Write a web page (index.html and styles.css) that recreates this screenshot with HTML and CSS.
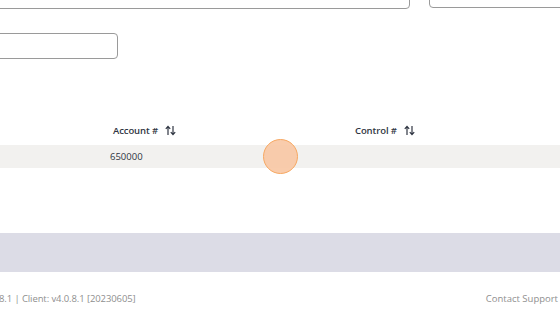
FILE: index.html
```html
<!DOCTYPE html>
<html>
<head>
<meta charset="utf-8">
<link rel="stylesheet" href="styles.css">
</head>
<body>
<div class="page">
  <div class="inputs-row">
    <div class="field field-wide"></div>
    <div class="field field-side"></div>
  </div>
  <div class="field field-small"></div>
  <div class="table">
    <div class="thead">
      <div class="th th-account">Account #
        <svg class="sort" width="11" height="11" viewBox="0 0 11 11"><path d="M3 10V1.5M0.8 3.8L3 1.3L5.2 3.8M8 1v8.5M5.8 7.2L8 9.7L10.2 7.2" fill="none" stroke="#2f3542" stroke-width="1.2"/></svg>
      </div>
      <div class="th th-control">Control #
        <svg class="sort" width="11" height="11" viewBox="0 0 11 11"><path d="M3 10V1.5M0.8 3.8L3 1.3L5.2 3.8M8 1v8.5M5.8 7.2L8 9.7L10.2 7.2" fill="none" stroke="#2f3542" stroke-width="1.2"/></svg>
      </div>
    </div>
    <div class="tr">
      <div class="td td-account">650000</div>
      <span class="touch"></span>
    </div>
  </div>
  <div class="band"></div>
  <div class="footer">
    <span class="version">8.1 | Client: v4.0.8.1 [20230605]</span>
    <span class="support">Contact Support</span>
  </div>
</div>
</body>
</html>
```
FILE: styles.css
```css
html, body {
  margin: 0;
  padding: 0;
  background: #ffffff;
  overflow: hidden;
}
.page {
  width: 560px;
  height: 315px;
  overflow: hidden;
  font-family: "Open Sans", "Noto Sans", sans-serif;
  color: #2f3542;
  display: flex;
  flex-direction: column;
}
.field {
  border: 1px solid #9a9a9a;
  border-radius: 4px;
  box-sizing: border-box;
  background: #fff;
  flex-shrink: 0;
}
.inputs-row {
  display: flex;
  gap: 19px;
  margin-top: -21px;
  margin-left: -10px;
  align-items: flex-start;
}
.field-wide {
  width: 420px;
  height: 30px;
}
.field-side {
  width: 160px;
  height: 29px;
}
.field-small {
  width: 129px;
  height: 26px;
  margin-left: -11px;
  margin-top: 24px;
}
.table {
  margin-top: 56px;
  display: flex;
  flex-direction: column;
}
.thead {
  height: 30px;
  display: flex;
  align-items: center;
  font-size: 9.5px;
  font-weight: 600;
  letter-spacing: -0.1px;
}
.th {
  display: flex;
  align-items: center;
}
.th-account {
  margin-left: 113px;
  width: 242px;
}
.sort {
  margin-left: 7px;
}
.tr {
  height: 23px;
  background: #f2f1ef;
  display: flex;
  align-items: center;
  position: relative;
  font-size: 9.5px;
}
.td-account {
  margin-left: 110px;
}
.touch {
  position: absolute;
  left: 263px;
  top: -6px;
  width: 35px;
  height: 35px;
  box-sizing: border-box;
  border-radius: 50%;
  background: rgba(248, 200, 165, 0.92);
  border: 1.5px solid #f7a862;
}
.band {
  margin-top: 65px;
  height: 39px;
  background: #dcdce6;
}
.footer {
  flex: 1;
  display: flex;
  justify-content: space-between;
  align-items: center;
  font-size: 9.5px;
  color: #8f8f8f;
  padding-top: 10px;
}
.version {
  margin-left: -1px;
  letter-spacing: -0.1px;
}
.support {
  margin-right: 2px;
}
```
